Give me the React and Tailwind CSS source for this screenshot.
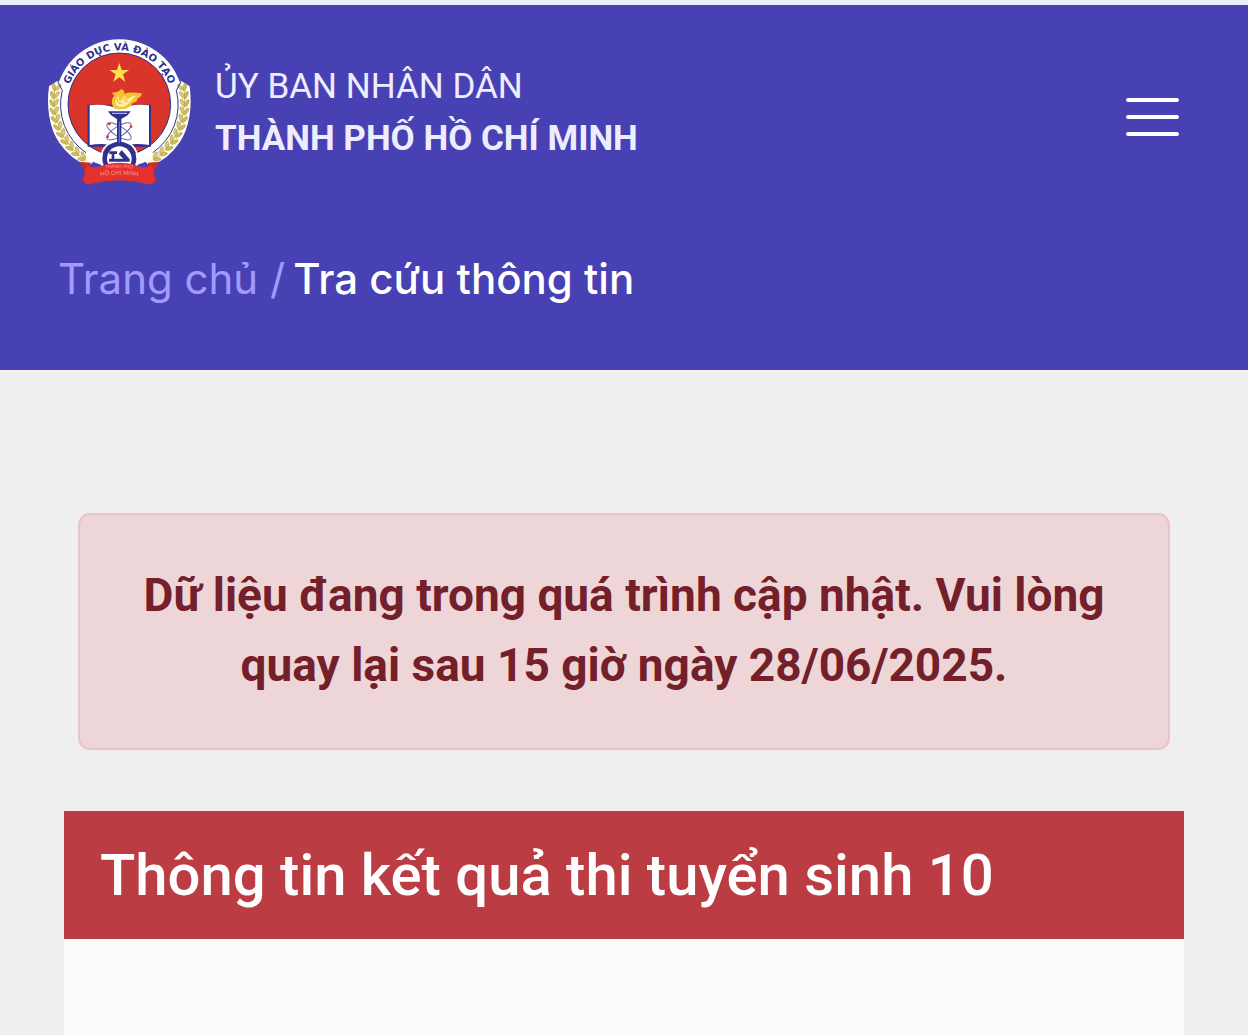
const LEAF_ANGLES = [-14, -7, 0, 7, 14, 21, 28, 35, 42, 49, 56];

function WheatEar({ flip }) {
    return (
        <g transform={flip ? 'translate(474 0) scale(-1 1)' : undefined}>
            <path d="M52 157 L28 172 C20 230 28 295 58 338 C82 374 112 396 146 408 L166 386 C106 362 66 300 62 220 C62 200 68 190 66 180 Z"
                fill="#fffdf0" stroke="#fff" strokeWidth="4" strokeLinejoin="round" />
            <path d="M43 178 C34 270 70 350 136 392" fill="none" stroke="#a89a3c" strokeWidth="2" />
            {LEAF_ANGLES.map(a => (
                <g key={a} transform={`rotate(${-a} 237 222)`}>
                    <ellipse cx="35" cy="222" rx="5" ry="12" fill="#d0bd58" stroke="#8d8032" strokeWidth="1" transform="rotate(-28 35 222)" />
                    <ellipse cx="48" cy="219" rx="5" ry="11" fill="#dccb6c" stroke="#8d8032" strokeWidth="1" transform="rotate(28 48 219)" />
                </g>
            ))}
        </g>
    );
}

function Emblem() {
    return (
        <svg viewBox="20 26 435 447" className="h-[149px] w-[145px] shrink-0" role="img" aria-label="Giáo dục và đào tạo">
            <defs>
                <path id="emblem-arc" d="M76 224 A161 161 0 0 1 398 224" />
                <path id="ribbon-arc" d="M158 424 Q237 407 316 424" />
                <path id="ribbon-arc-2" d="M148 445 Q237 427 326 445" />
            </defs>
            <circle cx="237" cy="222" r="192" fill="#fff" />
            <WheatEar />
            <WheatEar flip />
            <path d="M68 168 A184 184 0 0 1 406 168 L409 184 A172 172 0 0 1 337 370 H137 A172 172 0 0 1 65 184 Z" fill="#fff" />
            <path d="M52 157 L66 183 A174 174 0 0 0 137 370" fill="none" stroke="#2f3192" strokeWidth="3" />
            <path d="M422 157 L408 183 A174 174 0 0 1 337 370" fill="none" stroke="#2f3192" strokeWidth="3" />
            <circle cx="237" cy="225" r="154" fill="#d9352b" stroke="#2f3192" strokeWidth="3" />
            <text fill="#2f3192" fontSize="30" fontWeight="700" fontFamily="DejaVu Sans, sans-serif" textAnchor="middle">
                <textPath href="#emblem-arc" startOffset="50%">GIÁO DỤC VÀ ĐÀO TẠO</textPath>
            </text>
            <path d="M237 101 L244 122 L266 122 L248 135 L255 157 L237 144 L219 157 L226 135 L208 122 L230 122 Z" fill="#ffe14a" />

            {/* book */}
            <path d="M142 226 H332 V352 H142 Z" fill="#2f3192" />
            <path d="M148 228 Q200 222 235 240 Q272 222 326 228 V347 Q270 338 237 356 Q204 338 148 347 Z" fill="#fff" />

            {/* atom */}
            <g fill="none" stroke="#6265ad" strokeWidth="3">
                <ellipse cx="236" cy="306" rx="42" ry="15" transform="rotate(32 236 306)" />
                <ellipse cx="236" cy="306" rx="42" ry="15" transform="rotate(-32 236 306)" />
            </g>
            <g fill="#d9352b">
                <circle cx="207" cy="284" r="4" />
                <circle cx="272" cy="292" r="4" />
                <circle cx="202" cy="322" r="4" />
            </g>

            {/* gear with compass */}
            <circle cx="237" cy="388" r="55" fill="none" stroke="#fff" strokeWidth="5" />
            <circle cx="237" cy="388" r="51" fill="#2f3192" />
            <circle cx="237" cy="388" r="37" fill="#fff" />
            <path d="M207 366 H230 V374 H222 V391 H214 V374 H207 Z M244 362 L268 390 H250 L235 374 Z M206 388 H268 V397 H206 Z" fill="#2f3192" />

            {/* torch */}
            <path d="M220 236 C212 222 213 208 222 199 L214 190 C226 190 236 187 243 179 C250 181 254 188 252 194 C266 186 284 191 305 192 C302 202 298 206 290 208 C294 214 286 219 277 220 C272 234 256 240 243 239 C234 240 226 240 220 236 Z" fill="#f5c431" />
            <path d="M229 230 C222 218 226 206 235 200 C233 212 239 218 244 212 C247 206 250 202 256 200 C254 210 260 214 266 206 C272 202 280 200 288 199 C280 206 274 210 272 216 C262 222 262 232 245 233 Z" fill="#fff0a0" />
            <path d="M231 209 C230 218 235 223 243 221 M252 207 C251 215 256 219 262 215" fill="none" stroke="#e8932a" strokeWidth="3" />
            <path d="M203 246 H271 L262 258 Q251 264 243 269 V344 H230 V269 Q222 264 212 258 Z" fill="#2f3192" />
            <path d="M215 252 H260" stroke="#c7cdf0" strokeWidth="3" />
            <path d="M237 276 V340" stroke="#9aa0d8" strokeWidth="2" />

            {/* ribbon */}
            <path d="M118 397 L151 400 V449 L124 455 L134 430 Z M356 397 L323 400 V449 L350 455 L340 430 Z" fill="#c92b2b" />
            <path d="M139 406 Q164 422 190 407 Q237 394 284 407 Q310 422 335 406 L345 454 Q334 470 318 463 Q237 442 156 463 Q140 470 129 454 Z" fill="#e3312d" />
            <g fill="#ff9d90" fontFamily="Liberation Sans, sans-serif" textAnchor="middle">
                <text fontSize="14"><textPath href="#ribbon-arc" startOffset="50%">THÀNH PHỐ</textPath></text>
                <text fontSize="18"><textPath href="#ribbon-arc-2" startOffset="50%">HỒ CHÍ MINH</textPath></text>
            </g>
        </svg>
    );
}

export default function App() {
    return (
        <div className="flex min-h-screen flex-col bg-[#efefef] font-[Roboto,'Noto_Sans',sans-serif]">
            <header className="border-t-5 border-[#e8eefa]">
                <div className="flex items-center justify-between bg-[#4841b4] px-[47px] pt-[33px] pb-7">
                    <a href="#" className="flex items-center gap-[23px] text-[35px] leading-[52px] text-[#eeedff]">
                        <Emblem />
                        <span className="flex flex-col">
                            <span>ỦY BAN NHÂN DÂN</span>
                            <span className="font-bold">THÀNH PHỐ HỒ CHÍ MINH</span>
                        </span>
                    </a>
                    <button type="button" aria-label="Menu" className="mt-2 mr-[22px] flex flex-col gap-[13px] py-3">
                        <span className="h-1 w-[53px] rounded-full bg-white" />
                        <span className="h-1 w-[53px] rounded-full bg-white" />
                        <span className="h-1 w-[53px] rounded-full bg-white" />
                    </button>
                </div>
                <nav aria-label="Breadcrumb" className="bg-[#4841b4] px-[58px] pt-8 pb-[59px] font-[Inter,sans-serif] text-[42px] leading-16">
                    <ol className="flex gap-2">
                        <li className="text-[#a29bff]"><a href="#">Trang chủ</a> /</li>
                        <li className="font-medium text-white" aria-current="page">Tra cứu thông tin</li>
                    </ol>
                </nav>
            </header>

            <main className="flex grow flex-col px-16 pt-[143px]">
                <div role="alert" className="mx-[14px] rounded-xl border-2 border-[#ecc3c6] bg-[#eed6d8] px-10 pt-[45px] pb-12 text-center text-[46px] leading-[70px] font-bold text-[#74202a]">
                    Dữ liệu đang trong quá trình cập nhật. Vui lòng quay lại sau 15 giờ ngày 28/06/2025.
                </div>
                <section className="mt-[61px] flex grow flex-col bg-[#fcfcfc]">
                    <h1 className="bg-[#bb3c43] px-9 py-6 text-[58px] leading-20 font-medium text-white">
                        Thông tin kết quả thi tuyển sinh 10
                    </h1>
                </section>
            </main>
        </div>
    );
}
